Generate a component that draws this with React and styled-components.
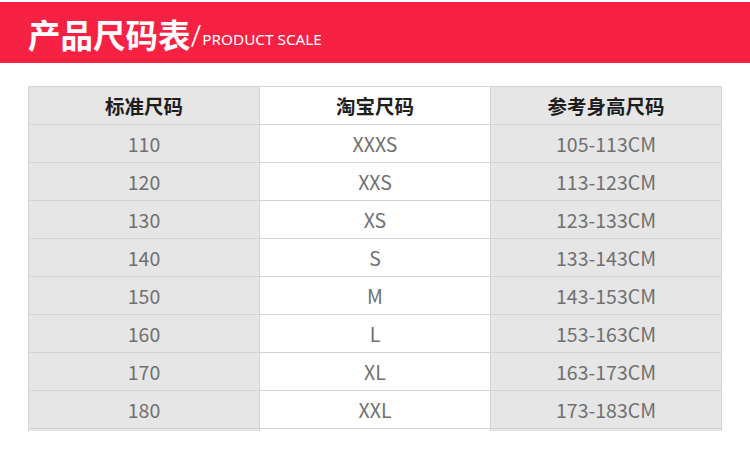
import styled, { createGlobalStyle } from "styled-components";

const GlobalStyle = createGlobalStyle`
  html, body {
    margin: 0;
    padding: 0;
    background: #fff;
    font-family: "Noto Sans CJK SC", "Noto Sans", sans-serif;
  }
`;

const Page = styled.div`
  width: 750px;
  height: 462px;
  overflow: hidden;
  padding-top: 2px;
  box-sizing: border-box;
`;

const Banner = styled.div`
  height: 61px;
  background: #f72243;
  display: flex;
  align-items: center;
  padding-left: 28px;
  padding-top: 2px;
  box-sizing: border-box;
  color: #fff;
`;

const Title = styled.span`
  font-family: "Noto Sans CJK SC", sans-serif;
  font-weight: 700;
  font-size: 32.5px;
`;

const Slash = styled.span`
  font-family: "Noto Sans", sans-serif;
  font-weight: 300;
  font-size: 31px;
  margin: 0 1px 0 0;
  position: relative;
  top: 1px;
`;

const SubTitle = styled.span`
  font-family: "Noto Sans", sans-serif;
  font-size: 15.3px;
  position: relative;
  top: 5px;
`;

const Table = styled.div`
  margin: 23px 0 0 28px;
  width: 693px;
  display: grid;
  grid-template-columns: 231px 231px 231px;
  border-top: 1px solid #d4d4d4;
  border-left: 1px solid #d4d4d4;
`;

const Cell = styled.div`
  height: ${(p) => (p.$stub ? "2px" : "37px")};
  display: flex;
  align-items: center;
  justify-content: center;
  background: ${(p) => (p.$shaded ? "#e6e6e6" : "#fff")};
  border-right: 1px solid #d4d4d4;
  border-bottom: ${(p) => (p.$stub ? "none" : "1px solid #d4d4d4")};
  font-family: "Noto Sans CJK SC", sans-serif;
  font-size: 19.5px;
  font-weight: ${(p) => (p.$head ? 700 : 400)};
  color: ${(p) => (p.$head ? "#1e1e1e" : "#707070")};
`;

const headers = ["标准尺码", "淘宝尺码", "参考身高尺码"];

const rows = [
  ["110", "XXXS", "105-113CM"],
  ["120", "XXS", "113-123CM"],
  ["130", "XS", "123-133CM"],
  ["140", "S", "133-143CM"],
  ["150", "M", "143-153CM"],
  ["160", "L", "153-163CM"],
  ["170", "XL", "163-173CM"],
  ["180", "XXL", "173-183CM"],
];

export default function App() {
  return (
    <Page>
      <GlobalStyle />
      <Banner>
        <Title>产品尺码表</Title>
        <Slash>/</Slash>
        <SubTitle>PRODUCT SCALE</SubTitle>
      </Banner>
      <Table>
        {headers.map((h, i) => (
          <Cell key={h} $head $shaded={i !== 1}>
            {h}
          </Cell>
        ))}
        {rows.map((row, r) =>
          row.map((v, i) => (
            <Cell key={`${r}-${i}`} $shaded={i !== 1}>
              {v}
            </Cell>
          ))
        )}
        {headers.map((h, i) => (
          <Cell key={`stub-${i}`} $stub $shaded={i !== 1} />
        ))}
      </Table>
    </Page>
  );
}
